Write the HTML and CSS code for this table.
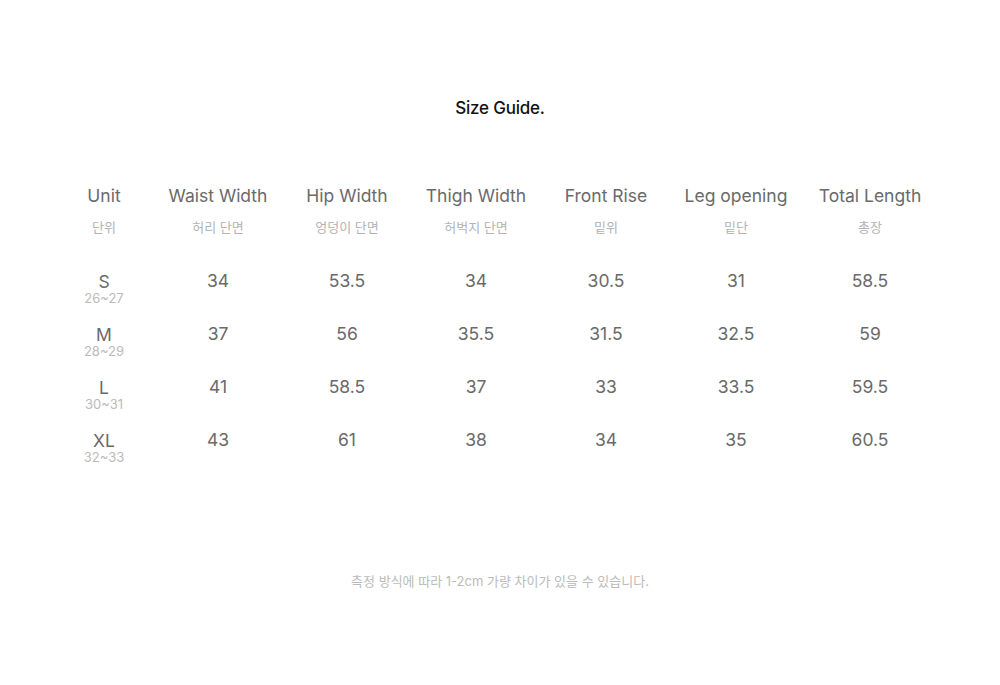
FILE: index.html
```html
<!DOCTYPE html>
<html lang="ko">
<head>
<meta charset="utf-8">
<title>Size Guide</title>
<link rel="stylesheet" href="styles.css">
</head>
<body>
<main class="page">
  <h1 class="title">Size Guide.</h1>
  <div class="grid">
    <div class="head"><span class="en">Unit</span><span class="ko">단위</span></div>
    <div class="head"><span class="en">Waist Width</span><span class="ko">허리 단면</span></div>
    <div class="head"><span class="en">Hip Width</span><span class="ko">엉덩이 단면</span></div>
    <div class="head"><span class="en">Thigh Width</span><span class="ko">허벅지 단면</span></div>
    <div class="head"><span class="en">Front Rise</span><span class="ko">밑위</span></div>
    <div class="head"><span class="en">Leg opening</span><span class="ko">밑단</span></div>
    <div class="head"><span class="en">Total Length</span><span class="ko">총장</span></div>

    <div class="cell size"><span class="letter">S</span><span class="range">26~27</span></div>
    <div class="cell">34</div><div class="cell">53.5</div><div class="cell">34</div><div class="cell">30.5</div><div class="cell">31</div><div class="cell">58.5</div>

    <div class="cell size"><span class="letter">M</span><span class="range">28~29</span></div>
    <div class="cell">37</div><div class="cell">56</div><div class="cell">35.5</div><div class="cell">31.5</div><div class="cell">32.5</div><div class="cell">59</div>

    <div class="cell size"><span class="letter">L</span><span class="range">30~31</span></div>
    <div class="cell">41</div><div class="cell">58.5</div><div class="cell">37</div><div class="cell">33</div><div class="cell">33.5</div><div class="cell">59.5</div>

    <div class="cell size"><span class="letter">XL</span><span class="range">32~33</span></div>
    <div class="cell">43</div><div class="cell">61</div><div class="cell">38</div><div class="cell">34</div><div class="cell">35</div><div class="cell">60.5</div>
  </div>
  <p class="note">측정 방식에 따라 1-2cm 가량 차이가 있을 수 있습니다.</p>
</main>
</body>
</html>
```
FILE: styles.css
```css
* { box-sizing: border-box; }
html, body { margin: 0; padding: 0; background: #fff; }
body {
  font-family: Inter, "Noto Sans CJK KR", sans-serif;
  width: 1000px;
  height: 685px;
  overflow: hidden;
}
.page {
  display: flex;
  flex-direction: column;
  align-items: stretch;
}
.title {
  margin: 98px 0 0;
  font-size: 17px;
  line-height: 20px;
  font-weight: 500;
  color: #111;
  text-align: center;
  letter-spacing: -0.2px;
}
.grid {
  margin: 67px 0 0 64px;
  display: grid;
  grid-template-columns: 80px 148px 110px 148px 112px 148px 120px;
  row-gap: 20px;
}
.head {
  display: flex;
  flex-direction: column;
  align-items: center;
  margin-bottom: 15px;
}
.head .en {
  font-size: 17.5px;
  line-height: 22px;
  color: #6a6a6a;
}
.head .ko {
  margin-top: 11px;
  font-size: 13px;
  line-height: 18px;
  color: #b3b3b3;
}
.cell {
  display: flex;
  flex-direction: column;
  align-items: center;
  font-size: 17.5px;
  line-height: 20px;
  color: #6a6a6a;
}
.size {
  padding-top: 1px;
}
.size .letter {
  line-height: 20px;
}
.size .range {
  font-size: 13px;
  line-height: 12px;
  color: #bbb;
}
.note {
  margin: 109px 0 0;
  text-align: center;
  font-size: 13px;
  line-height: 18px;
  color: #bbb;
}
```
